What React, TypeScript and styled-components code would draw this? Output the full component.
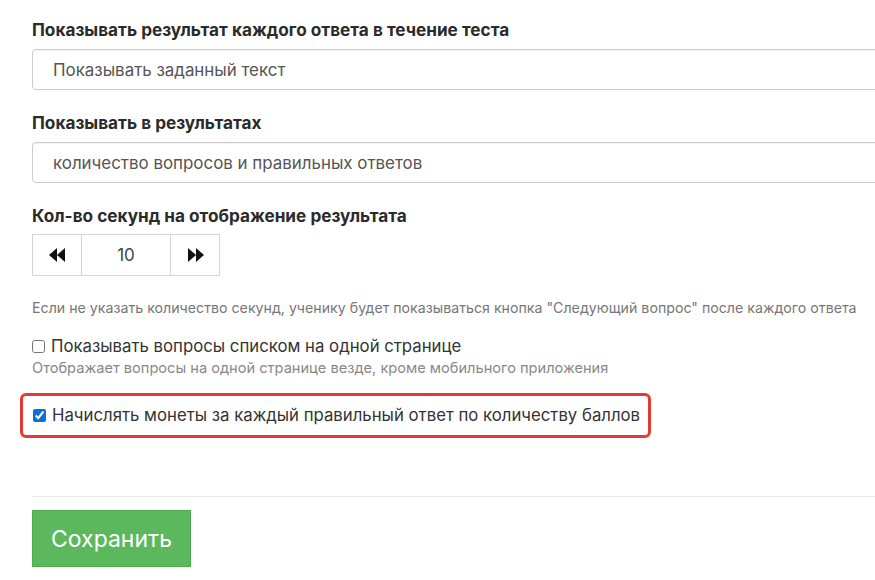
import React from "react";
import styled, { createGlobalStyle } from "styled-components";

const GlobalStyle = createGlobalStyle`
  html, body {
    margin: 0;
    padding: 0;
    background: #fff;
    overflow: hidden;
  }
  body {
    font-family: Inter, "Noto Sans", "Liberation Sans", sans-serif;
    color: #333;
  }
`;

const Page = styled.div`
  width: 870px;
  padding: 18px 0 0 32px;
`;

const FormGroup = styled.div`
  margin-bottom: 21px;
`;

const Label = styled.div<{ $tight?: boolean }>`
  font-size: 17.2px;
  font-weight: 700;
  color: #2b2b2b;
  line-height: 24px;
  margin-bottom: ${(p) => (p.$tight ? "6px" : "7px")};
`;

const SelectBox = styled.div`
  height: 41px;
  box-sizing: border-box;
  border: 1px solid #ccc;
  border-radius: 4px;
  padding: 0 20px;
  display: flex;
  align-items: center;
  font-size: 16.9px;
  color: #555;
  box-shadow: inset 0 1px 1px rgba(0, 0, 0, 0.05);
`;

const Spinner = styled.div`
  display: inline-flex;
  height: 42px;
  border: 1px solid #d4d4d4;
  box-sizing: border-box;
`;

const SpinButton = styled.div<{ $side: "left" | "right" }>`
  width: 48px;
  display: flex;
  align-items: center;
  justify-content: center;
  ${(p) =>
    p.$side === "left"
      ? "border-right: 1px solid #d4d4d4;"
      : "border-left: 1px solid #d4d4d4;"}
`;

const SpinValue = styled.div`
  width: 88px;
  display: flex;
  align-items: center;
  justify-content: center;
  font-size: 17px;
  color: #444;
`;

const HelpText = styled.div`
  font-size: 14.2px;
  color: #777;
  margin-top: 22px;
  line-height: 20px;
  white-space: nowrap;
`;

const CheckRow = styled.label`
  display: flex;
  align-items: center;
  gap: 6px;
  font-size: 16.75px;
  color: #333;
  line-height: 24px;
  white-space: nowrap;
`;

const Checkbox = styled.input`
  width: 13px;
  height: 13px;
  margin: 0;
  accent-color: #0b6fd8;
`;

const SubText = styled.div`
  font-size: 14.6px;
  color: #888;
  line-height: 20px;
`;

const CheckGroup = styled.div`
  margin-top: 16px;
`;

const Highlight = styled.div`
  margin: 15px 0 0 -12px;
  width: 631px;
  box-sizing: border-box;
  border: 3px solid #e53a33;
  border-radius: 6px;
  padding: 7px 0 8px 10px;
`;

const Divider = styled.hr`
  border: 0;
  border-top: 1px solid #e8e8e8;
  margin: 58px 0 13px;
`;

const SaveButton = styled.button`
  width: 159px;
  height: 57px;
  background: #5cb85c;
  border: 1px solid #4cae4c;
  color: #fff;
  font-family: inherit;
  font-size: 23px;
  cursor: pointer;
`;

const Arrow: React.FC<{ dir: "left" | "right" }> = ({ dir }) => (
  <svg width="17" height="14" viewBox="0 0 17 14">
    {dir === "left" ? (
      <g fill="#111">
        <polygon points="0,7 8,0 8,14" />
        <polygon points="8,7 16,0 16,14" />
      </g>
    ) : (
      <g fill="#111">
        <polygon points="1,0 9,7 1,14" />
        <polygon points="9,0 17,7 9,14" />
      </g>
    )}
  </svg>
);

export default function App() {
  return (
    <>
      <GlobalStyle />
      <Page>
        <FormGroup>
          <Label>Показывать результат каждого ответа в течение теста</Label>
          <SelectBox>Показывать заданный текст</SelectBox>
        </FormGroup>
        <FormGroup>
          <Label>Показывать в результатах</Label>
          <SelectBox>количество вопросов и правильных ответов</SelectBox>
        </FormGroup>
        <div>
          <Label $tight>Кол-во секунд на отображение результата</Label>
          <Spinner>
            <SpinButton $side="left">
              <Arrow dir="left" />
            </SpinButton>
            <SpinValue>10</SpinValue>
            <SpinButton $side="right">
              <Arrow dir="right" />
            </SpinButton>
          </Spinner>
          <HelpText>
            Если не указать количество секунд, ученику будет показываться кнопка
            "Следующий вопрос" после каждого ответа
          </HelpText>
        </div>
        <CheckGroup>
          <CheckRow>
            <Checkbox type="checkbox" />
            Показывать вопросы списком на одной странице
          </CheckRow>
          <SubText>
            Отображает вопросы на одной странице везде, кроме мобильного
            приложения
          </SubText>
        </CheckGroup>
        <Highlight>
          <CheckRow>
            <Checkbox type="checkbox" defaultChecked />
            Начислять монеты за каждый правильный ответ по количеству баллов
          </CheckRow>
        </Highlight>
        <Divider />
        <SaveButton>Сохранить</SaveButton>
      </Page>
    </>
  );
}
